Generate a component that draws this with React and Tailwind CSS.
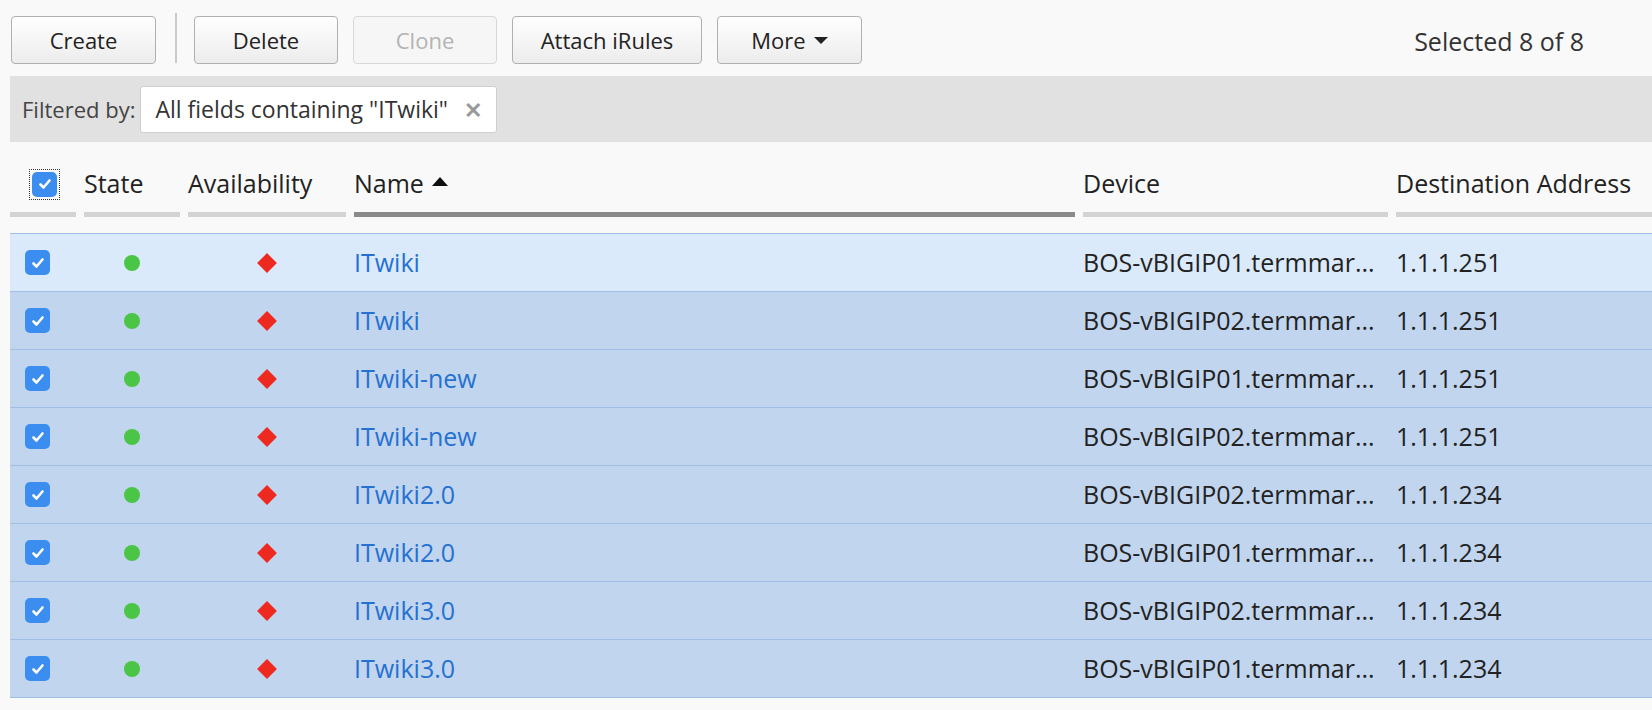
import React from "react";

const rows = [
  { name: "ITwiki", device: "BOS-vBIGIP01.termmar...", dest: "1.1.1.251", hover: true },
  { name: "ITwiki", device: "BOS-vBIGIP02.termmar...", dest: "1.1.1.251" },
  { name: "ITwiki-new", device: "BOS-vBIGIP01.termmar...", dest: "1.1.1.251" },
  { name: "ITwiki-new", device: "BOS-vBIGIP02.termmar...", dest: "1.1.1.251" },
  { name: "ITwiki2.0", device: "BOS-vBIGIP02.termmar...", dest: "1.1.1.234" },
  { name: "ITwiki2.0", device: "BOS-vBIGIP01.termmar...", dest: "1.1.1.234" },
  { name: "ITwiki3.0", device: "BOS-vBIGIP02.termmar...", dest: "1.1.1.234" },
  { name: "ITwiki3.0", device: "BOS-vBIGIP01.termmar...", dest: "1.1.1.234" },
];

const cols = "grid grid-cols-[66px_96px_158px_721px_305px_1fr] gap-x-[8px]";

const Check = () => (
  <div className="w-[25px] h-[25px] rounded-[5px] bg-[#3b8ef0] flex items-center justify-center">
    <svg width="16" height="16" viewBox="0 0 16 16">
      <path d="M3.5 8.5l3 3 6-7" fill="none" stroke="white" strokeWidth="2.6" strokeLinecap="round" strokeLinejoin="round" />
    </svg>
  </div>
);

const Button = ({ children, width, disabled }) => (
  <button
    className={
      "h-[48px] rounded-[4px] border text-[22px] flex items-center justify-center " +
      width +
      (disabled
        ? " border-[#d8d8d8] bg-[#f6f6f6] text-[#b3b3b3]"
        : " border-[#b0b0b0] bg-gradient-to-b from-white to-[#ececec] text-[#222]")
    }
  >
    {children}
  </button>
);

const HeaderCell = ({ children, dark }) => (
  <div className="flex flex-col h-[76px]">
    <div className="flex-1 flex items-center pt-[14px] text-[25px] text-[#222]">{children}</div>
    <div className={"h-[5px] mb-[1px] " + (dark ? "bg-[#8a8a8a]" : "bg-[#d3d3d3]")} />
  </div>
);

export default function App() {
  return (
    <div className="w-[1652px] h-[710px] bg-[#f9f9f9] overflow-hidden font-['Open_Sans',sans-serif]">
      {/* Toolbar */}
      <div className="h-[76px] flex items-start pt-[16px] pl-[11px] pr-[68px]">
        <Button width="w-[145px]">Create</Button>
        <div className="w-[2px] h-[50px] -mt-[3px] bg-[#cacaca] ml-[19px] mr-[17px]" />
        <div className="flex gap-x-[15px]">
          <Button width="w-[144px]">Delete</Button>
          <Button width="w-[144px]" disabled>Clone</Button>
          <Button width="w-[190px]">Attach iRules</Button>
          <Button width="w-[145px]">
            <span>More</span>
            <svg className="ml-[8px] mt-[2px]" width="14" height="8" viewBox="0 0 14 8">
              <polygon points="0,0 14,0 7,7" fill="#222" />
            </svg>
          </Button>
        </div>
        <div className="ml-auto h-[48px] mt-[2px] flex items-center text-[25px] text-[#333]">Selected 8 of 8</div>
      </div>

      {/* Filter bar */}
      <div className="ml-[10px] h-[66px] bg-[#e1e1e1] flex items-center pl-[12px]">
        <span className="text-[22px] text-[#444]">Filtered by:</span>
        <div className="ml-[5px] h-[47px] bg-white border border-[#cfcfcf] rounded-[3px] flex items-center pl-[14px] pr-[14px] text-[23px] text-[#333]">
          All fields containing "ITwiki"
          <span className="ml-[16px] text-[#999] font-bold text-[22px]">✕</span>
        </div>
      </div>

      {/* Header */}
      <div className={"ml-[10px] " + cols}>
        <div className="flex flex-col h-[76px]">
          <div className="flex-1 flex items-center pt-[14px] pl-[19px]">
            <div className="p-[2px] border border-dotted border-[#333]">
              <Check />
            </div>
          </div>
          <div className="h-[5px] mb-[1px] bg-[#d3d3d3]" />
        </div>
        <HeaderCell>State</HeaderCell>
        <HeaderCell>Availability</HeaderCell>
        <HeaderCell dark>
          Name
          <svg className="ml-[8px] -mt-[6px]" width="16" height="9" viewBox="0 0 16 9">
            <polygon points="0,9 16,9 8,0" fill="#111" />
          </svg>
        </HeaderCell>
        <HeaderCell>Device</HeaderCell>
        <HeaderCell>Destination Address</HeaderCell>
      </div>

      {/* Rows */}
      <div className="ml-[10px] mt-[15px] border-b border-[#a0bde6]">
        {rows.map((r, i) => (
          <div
            key={i}
            className={
              cols +
              " h-[58px] border-t border-[#a0bde6] items-center text-[25px] " +
              (r.hover ? "bg-[#dbeafa]" : "bg-[#c1d5ee]")
            }
          >
            <div className="pl-[15px]">
              <Check />
            </div>
            <div className="flex justify-center">
              <div className="w-[16px] h-[16px] rounded-full bg-[#4bc545]" />
            </div>
            <div className="flex justify-center">
              <div className="w-[14px] h-[14px] rotate-45 bg-[#ee2a20]" />
            </div>
            <div className="text-[#2571d1]">{r.name}</div>
            <div className="text-[#222] whitespace-nowrap">{r.device}</div>
            <div className="text-[#222]">{r.dest}</div>
          </div>
        ))}
      </div>
    </div>
  );
}
